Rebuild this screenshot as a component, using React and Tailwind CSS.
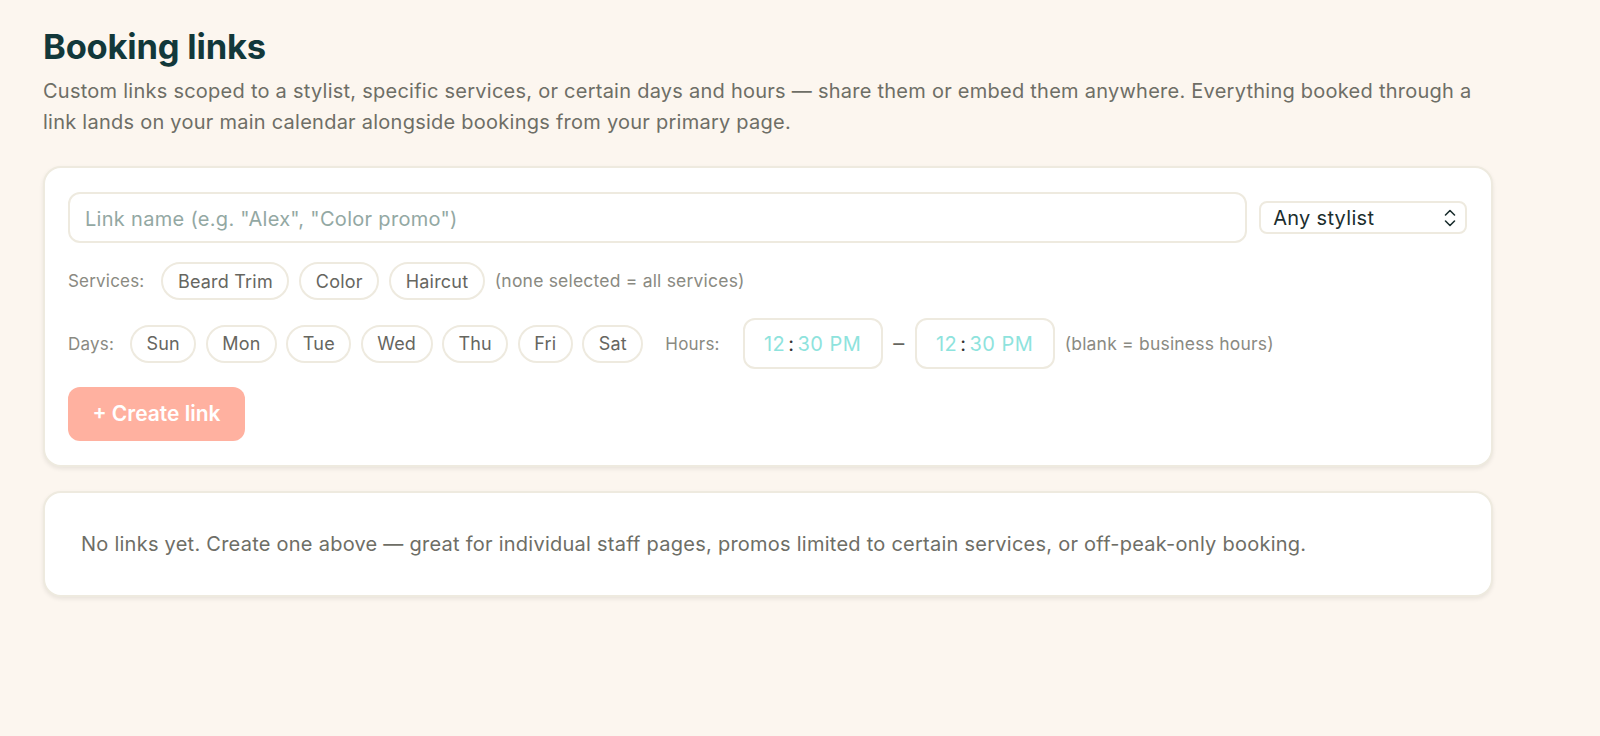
import React from "react"

const services = ["Beard Trim", "Color", "Haircut"]
const days = ["Sun", "Mon", "Tue", "Wed", "Thu", "Fri", "Sat"]

function Chip({ label }) {
    return (
        <button className="h-[38px] px-[14.5px] rounded-full border-2 border-[#eeeadf] bg-white text-[18px] text-[#66665f] tracking-[0.2px]">
            {label}
        </button>
    )
}

function TimeBox() {
    return (
        <div className="w-[140px] h-[51px] rounded-[12px] border-2 border-[#eeeadf] bg-white flex items-center justify-center text-[20px] tracking-[0.5px] text-[#8ee3dd]">
            <span>12</span>
            <span className="mx-[3px] text-[#333]">:</span>
            <span>30 PM</span>
        </div>
    )
}

export default function App() {
    return (
        <div className="min-h-[736px] bg-[#fcf6ef] pl-[43px] pt-[26px] font-['Inter',sans-serif]">
            <h1 className="text-[34.5px] leading-[42px] font-bold text-[#12383a] tracking-[-0.2px]">Booking links</h1>
            <p className="mt-[8px] w-[1440px] text-[20px] leading-[31px] text-[#6e6e66] tracking-[0.25px]">
                Custom links scoped to a stylist, specific services, or certain days and hours — share them or embed them anywhere. Everything booked through a link lands on your main calendar alongside bookings from your primary page.
            </p>

            <div className="mt-[28px] w-[1450px] h-[301px] rounded-[18px] border-2 border-[#eeeadf] bg-white shadow-[0_2px_4px_rgba(0,0,0,0.08)] pl-[23px] pr-[24px] pt-[24px]">
                <div className="flex items-center gap-[12px]">
                    <input
                        className="w-[1180px] h-[51px] rounded-[12px] border-2 border-[#eeeadf] pl-[15px] pr-[15px] pt-[2px] text-[20px] tracking-[0.3px] outline-none placeholder:text-[#93a8a3]"
                        placeholder={'Link name (e.g. "Alex", "Color promo")'}
                    />
                    <div className="w-[208px] h-[33px] rounded-[8px] border-2 border-[#eeeadf] flex items-center justify-between pl-[12px] pr-[9px] text-[20px] tracking-[0.3px] text-[#1b2e2e]">
                        <span>Any stylist</span>
                        <svg width="12" height="18" viewBox="0 0 12 18" fill="none" stroke="#1b2e2e" strokeWidth="1.6" strokeLinecap="round" strokeLinejoin="round">
                            <path d="M1.5 6 6 1.5 10.5 6" />
                            <path d="M1.5 12 6 16.5 10.5 12" />
                        </svg>
                    </div>
                </div>

                <div className="mt-[19px] flex items-center">
                    <span className="pt-[1px] text-[17px] text-[#8a8a82] mr-[17px] tracking-[0.2px]">Services:</span>
                    <div className="flex gap-[10px]">
                        {services.map((s) => (
                            <Chip key={s} label={s} />
                        ))}
                    </div>
                    <span className="ml-[10px] pt-[1px] text-[17.5px] text-[#8a8a82] tracking-[0.2px]">(none selected = all services)</span>
                </div>

                <div className="mt-[18px] flex items-center">
                    <span className="pt-[2px] text-[17px] text-[#8a8a82] mr-[16px] tracking-[0.2px]">Days:</span>
                    <div className="flex gap-[9.3px]">
                        {days.map((d) => (
                            <Chip key={d} label={d} />
                        ))}
                    </div>
                    <span className="ml-[22px] mr-[23px] pt-[2px] text-[17px] text-[#8a8a82] tracking-[0.2px]">Hours:</span>
                    <TimeBox />
                    <span className="mx-[8.5px] w-[15px] text-center text-[22px] text-[#66665f]">–</span>
                    <TimeBox />
                    <span className="ml-[10px] pt-[1px] text-[17.5px] text-[#8a8a82] tracking-[0.2px]">(blank = business hours)</span>
                </div>

                <button className="mt-[18px] w-[177px] h-[54px] rounded-[12px] bg-[#ffb1a0] text-white font-semibold text-[21px]">
                    + Create link
                </button>
            </div>

            <div className="mt-[24px] w-[1450px] h-[106px] rounded-[18px] border-2 border-[#eeeadf] bg-white shadow-[0_2px_4px_rgba(0,0,0,0.08)] pl-[36px] flex items-center text-[20px] text-[#6e6e66] tracking-[0.25px]">
                No links yet. Create one above — great for individual staff pages, promos limited to certain services, or off-peak-only booking.
            </div>
        </div>
    )
}
